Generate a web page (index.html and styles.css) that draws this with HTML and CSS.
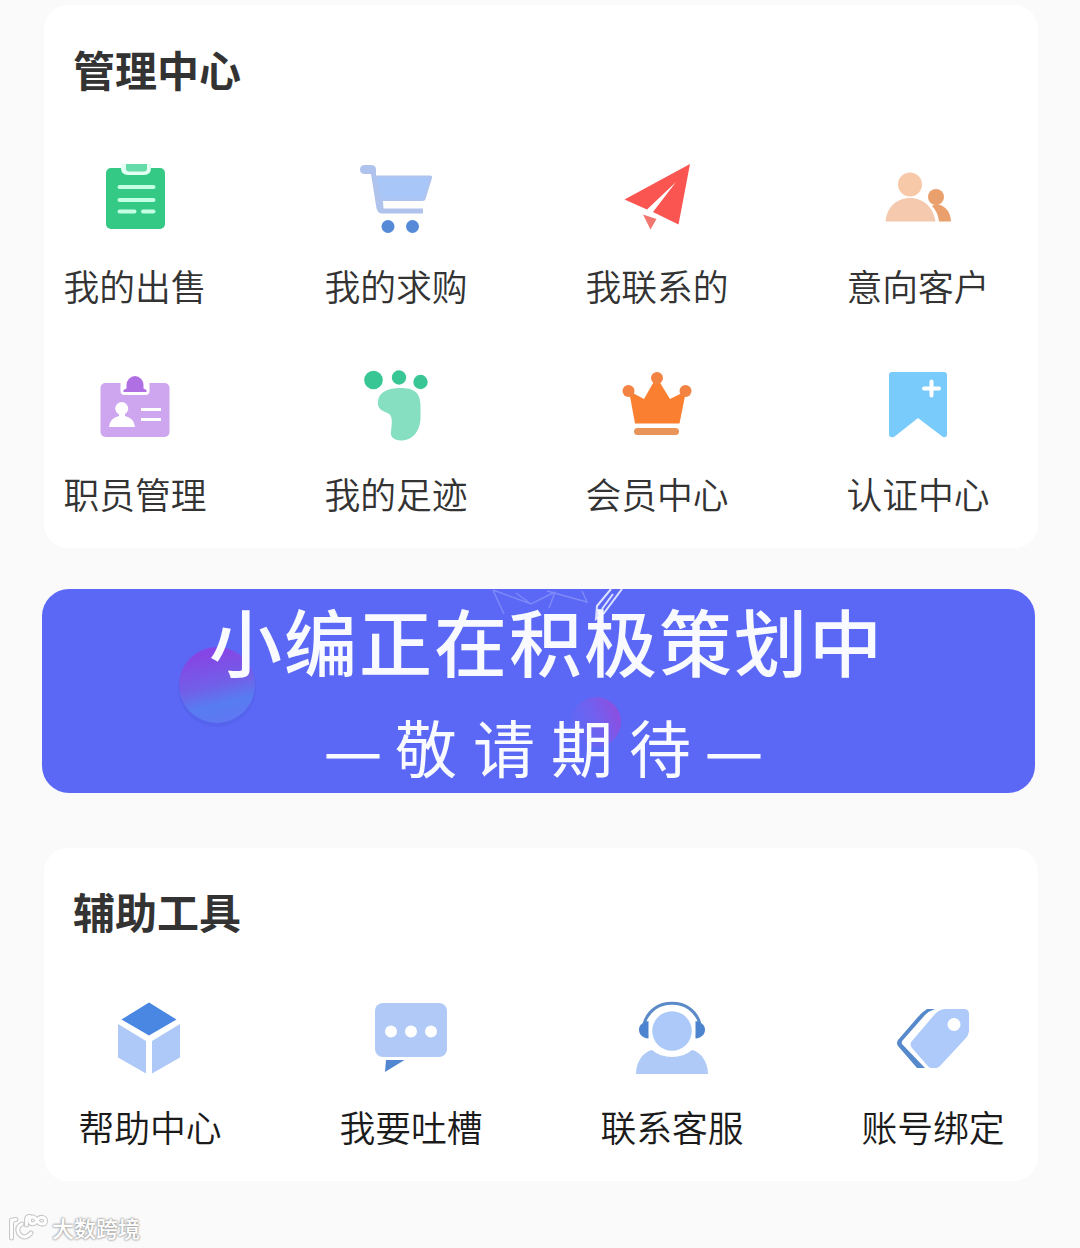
FILE: index.html
```html
<!DOCTYPE html>
<html lang="zh-CN">
<head>
<meta charset="utf-8">
<title>管理中心</title>
<link rel="stylesheet" href="styles.css">
</head>
<body>
<main class="page">
  <section class="card card-manage">
    <h2 class="card-title">管理中心</h2>
    <div class="grid">
      <a class="item">
        <svg class="icon" viewBox="90 155 90 90">
          <rect x="106" y="168" width="59" height="61" rx="5" fill="#35c986"/>
          <path d="M121 164V168q0 7 7 7h16q7 0 7-7v-4z" fill="#e2fff2"/>
          <path d="M126 164h21v4.500q0 3-3 3h-15q-3 0-3-3z" fill="#63dcaa"/>
          <path d="M119.500 187h34M119.500 200h34M119.500 211.500h15M143 211.500h10.500" stroke="#c4ffe4" stroke-width="4" stroke-linecap="round"/>
        </svg>
        <span class="label">我的出售</span>
      </a>
      <a class="item">
        <svg class="icon" viewBox="351 155 90 90">
          <path d="M376 175.500H430q2.500 0 2 2.500L425.500 199q-.5 2-3 2H383L383.500 208.500H423V213.500H382q-4 0-5.500-5L371 174H364q-4-.5-4-4.500t4-4.500H371q4.500 0 5 4z" fill="#afc3ec"/>
          <path d="M377 177H430L423.500 199.500H381z" fill="#a9c6f8"/>
          <circle cx="388" cy="226.500" r="6.500" fill="#558ad9"/><circle cx="412.500" cy="226.500" r="6.500" fill="#558ad9"/>
        </svg>
        <span class="label">我的求购</span>
      </a>
      <a class="item">
        <svg class="icon" viewBox="612 155 90 90">
          <path d="M690 164L624.500 199.500 647 209.500 676 182 653 212 678.500 224.500z" fill="#fb5552"/>
          <path d="M643 214.500L656.500 219 650.500 229.500z" fill="#f27670"/>
        </svg>
        <span class="label">我联系的</span>
      </a>
      <a class="item">
        <svg class="icon" viewBox="873 155 90 90">
          <path d="M936 204Q950 206 951 221.500H939Q938 212 932 206z" fill="#eaa06c"/>
          <circle cx="936" cy="197" r="8" fill="#eaa06c"/>
          <circle cx="910" cy="184.500" r="12" fill="#f8c9a9"/>
          <path d="M885.500 221.500C887 205 899 198 910 198S933 205 935.500 221.500z" fill="#f5c9ad"/>
        </svg>
        <span class="label">意向客户</span>
      </a>
      <a class="item">
        <svg class="icon" viewBox="90 363 90 90">
          <rect x="100.500" y="383" width="69" height="54" rx="5" fill="#cda6ef"/>
          <path d="M120.500 382V391q0 4 4 4h21q4 0 4-4V382z" fill="#fff"/>
          <path d="M123.500 392v-2l3-1.500V385a8.500 9 0 0 1 17 0V388.500l3 1.500v2z" fill="#b070e3"/>
          <circle cx="121.700" cy="408.500" r="6.500" fill="#fff"/><path d="M119 412h6v4q9 2 10 11H109q1-9 10-11z" fill="#fff"/>
          <path d="M141 409.500h20M141 419.500h20" stroke="#fff" stroke-width="3"/>
        </svg>
        <span class="label">职员管理</span>
      </a>
      <a class="item">
        <svg class="icon" viewBox="351 363 90 90">
          <g fill="#38c794"><circle cx="373.500" cy="380" r="9.300"/><circle cx="399" cy="377.500" r="7.200"/><circle cx="420.500" cy="382" r="7.200"/></g>
          <path d="M378 401C379 392 388 388 400 388C414 388 420 392 420.500 405V418C420 431 413 440.500 401 440.500C394 440.500 390 437 391 431C392 425 393 416 388.500 413.500C382 411 377 409 378 401z" fill="#85dfc0"/>
        </svg>
        <span class="label">我的足迹</span>
      </a>
      <a class="item">
        <svg class="icon" viewBox="612 363 90 90">
          <path d="M629 391L644 399 656.500 377 670 399 686 391 679.500 423.500H635z" fill="#fb7f31"/>
          <g fill="#f38342"><circle cx="657" cy="378" r="6"/><circle cx="628.500" cy="391" r="6"/><circle cx="685.500" cy="391" r="6"/></g>
          <rect x="634" y="428" width="45" height="7" rx="3.500" fill="#e99459"/>
        </svg>
        <span class="label">会员中心</span>
      </a>
      <a class="item">
        <svg class="icon" viewBox="873 363 90 90">
          <path d="M892 372H944q3 0 3 3V434q0 4-4 3L918 418 894 437q-5 1-5-3V375q0-3 3-3z" fill="#78cbfa"/>
          <path d="M931.500 381.500v14M924 388.500h15" stroke="#fff" stroke-width="4" stroke-linecap="round"/>
        </svg>
        <span class="label">认证中心</span>
      </a>
    </div>
  </section>

  <section class="banner">
    <svg class="banner-art" viewBox="0 0 993 204">
      <defs>
        <linearGradient id="orb" x1=".35" y1="0" x2=".6" y2="1"><stop offset=".1" stop-color="#8546e5"/><stop offset=".5" stop-color="#7160e8"/><stop offset=".75" stop-color="#577cf1"/><stop offset="1" stop-color="#6078f3"/></linearGradient>
        <linearGradient id="orb2" x1="1" y1=".2" x2="0" y2=".6"><stop offset="0" stop-color="#914bdd"/><stop offset=".5" stop-color="#7260ef"/><stop offset="1" stop-color="#5b69f5"/></linearGradient>
      </defs>
      <circle cx="175" cy="99" r="39" fill="#525ee3" opacity=".5"/>
      <circle cx="175" cy="96" r="38" fill="url(#orb)"/>
      <circle cx="554" cy="133" r="25" fill="url(#orb2)"/>
      <path d="M451 1L462 25M451 1L489 15 513 3M474 4L489 15M513 3L507 19M505 2L545 13 540 2" fill="none" stroke="#7d89f6" stroke-width="1.500"/>
      <path d="M569 0L555 17 554 30 562 24 580 0M571 5L560 20" fill="none" stroke="#dce1ff" stroke-width="2"/>
    </svg>
    <p class="banner-title">小编正在积极策划中</p>
    <p class="banner-sub"><span class="dash">—</span><span class="wait">敬请期待</span><span class="dash">—</span></p>
  </section>

  <section class="card card-tools">
    <h2 class="card-title">辅助工具</h2>
    <div class="grid">
      <a class="item">
        <svg class="icon" viewBox="105 993 90 90">
          <path d="M149 1002.500L176.500 1019.500 149 1035.500 121.500 1019.500z" fill="#4a87e3"/>
          <path d="M118 1024L146 1041V1073.500L118 1057.500zM180 1024L152 1041V1073.500L180 1057.500z" fill="#aec8f7"/>
        </svg>
        <span class="label">帮助中心</span>
      </a>
      <a class="item">
        <svg class="icon" viewBox="366 993 90 90">
          <rect x="375" y="1003" width="72" height="54" rx="8" fill="#b0c9f7"/>
          <g fill="#fff"><circle cx="391" cy="1031.500" r="6"/><circle cx="411" cy="1031.500" r="6"/><circle cx="431" cy="1031.500" r="6"/></g>
          <path d="M386 1060H404.500L385 1072z" fill="#5386d0"/>
        </svg>
        <span class="label">我要吐槽</span>
      </a>
      <a class="item">
        <svg class="icon" viewBox="627 993 90 90">
          <path d="M644 1024C648 1010 659 1003.300 672 1003.300S696 1010 700 1024" fill="none" stroke="#5b8ac6" stroke-width="3"/>
          <path d="M648.500 1021V1038.500C642 1038 639 1034 639 1029.500S643 1022 648.500 1021zM695.500 1021V1038.500C702 1038 705 1034 705 1029.500S701 1022 695.500 1021z" fill="#4c84cf"/>
          <circle cx="672" cy="1031" r="19.800" fill="#adc9fa"/>
          <path d="M636 1074C636 1062 643 1052 652 1050Q660 1057 672 1057T692 1050C701 1052 708 1062 708 1074z" fill="#b0caf8"/>
        </svg>
        <span class="label">联系客服</span>
      </a>
      <a class="item">
        <svg class="icon" viewBox="888 993 90 90">
          <path d="M933 1009H927Q922 1012 917 1018L898 1040Q896 1043 898 1046L917 1068H925L902 1044Q901 1042 903 1040L925 1015Q929 1011 935 1009z" fill="#5589cc"/>
          <path d="M946 1009H964Q969 1009 969 1014V1030Q969 1035 965 1039L940 1066Q938 1068 936 1068H931Q928 1067 926 1064L912 1048Q909 1044 912 1041L935 1014Q940 1009 946 1009z" fill="#aecafa"/>
          <circle cx="954" cy="1024.500" r="6.500" fill="#fff"/>
        </svg>
        <span class="label">账号绑定</span>
      </a>
    </div>
  </section>

  <footer class="brand">
    <svg class="brand-logo" viewBox="0 0 42 32">
      <defs><path id="mark" d="M4.500 8V26M4.500 11Q5 7.500 9 7.500M15 12Q9 15 11.500 21Q17 29 24 21M19.500 13V7Q20 4 23 4.500M30 8.500C26 2 22 6 22.500 9S27 13.500 30 8.500S38.500 5 38.500 9S33 13.500 30 8.500"/></defs>
      <use class="logo-edge" href="#mark"/>
      <use class="logo-line" href="#mark"/>
    </svg>
    <span class="brand-name">大数跨境</span>
  </footer>
</main>
</body>
</html>
```
FILE: styles.css
```css
* { box-sizing: border-box; }
body {
  margin: 0;
  background: #fafafa;
  color: #333;
  font-family: "Noto Sans CJK SC", "Noto Sans", sans-serif;
}
.page {
  width: 1080px;
  height: 1248px;
  padding-top: 5px;
  overflow: hidden;
}
.card {
  width: 994px;
  margin-left: 44px;
  background: #fff;
  border-radius: 24px;
}
.card-manage { height: 543px; padding: 34px 0 0 19px; }
.card-tools { height: 333px; margin-top: 55px; padding: 33px 0 0 34px; }
.card-title {
  margin: 0 0 56px 10px;
  font-size: 42px;
  line-height: 60px;
  font-weight: 700;
}
.card-tools .card-title { margin: 0 0 52px -5px; }
.grid {
  display: grid;
  grid-template-columns: repeat(4, 144px);
  column-gap: 117px;
  row-gap: 56px;
}
.item {
  display: flex;
  flex-direction: column;
  align-items: center;
  gap: 20px;
}
.card-tools .item { gap: 23px; }
.icon { display: block; width: 90px; height: 90px; }
.label {
  height: 42px;
  font-size: 35.8px;
  line-height: 40px;
  font-weight: 350;
  white-space: nowrap;
}
.card-tools .label { color: #1b1b1b; }
.banner {
  position: relative;
  width: 993px;
  height: 204px;
  margin: 41px 0 0 42px;
  border-radius: 27px;
  background: #5b68f6;
  color: #f8faff;
  overflow: hidden;
}
.banner-art { position: absolute; inset: 0; width: 993px; height: 204px; }
.banner-title {
  position: relative;
  margin: 0;
  padding: 8px 0 0 167px;
  font-size: 73px;
  line-height: 84px;
  letter-spacing: 2px;
  font-weight: 500;
  white-space: nowrap;
}
.banner-sub {
  position: relative;
  display: flex;
  margin: 23px 0 0 285px;
  font-size: 62px;
  line-height: 84px;
  white-space: nowrap;
}
.wait { width: 329px; padding-left: 16px; letter-spacing: 16px; font-weight: 400; }
.dash {
  width: 52px;
  padding-top: 5px;
  font-family: "Liberation Sans", sans-serif;
  font-size: 52px;
  -webkit-text-stroke: 1px currentColor;
}
.brand {
  display: flex;
  align-items: center;
  gap: 3px;
  margin: 31px 0 0 7px;
  height: 32px;
}
.brand-logo { width: 42px; height: 32px; fill: none; stroke-linecap: round; }
.logo-edge { stroke: #c8c8c8; stroke-width: 5; }
.logo-line { stroke: #fff; stroke-width: 2.800; }
.brand-name {
  color: #fff;
  font-size: 22px;
  line-height: 30px;
  padding-bottom: 2px;
  font-weight: 500;
  text-shadow: 0 0 2px #999, 0 0 2px #aaa, 0 0 3px #bbb;
}
```
